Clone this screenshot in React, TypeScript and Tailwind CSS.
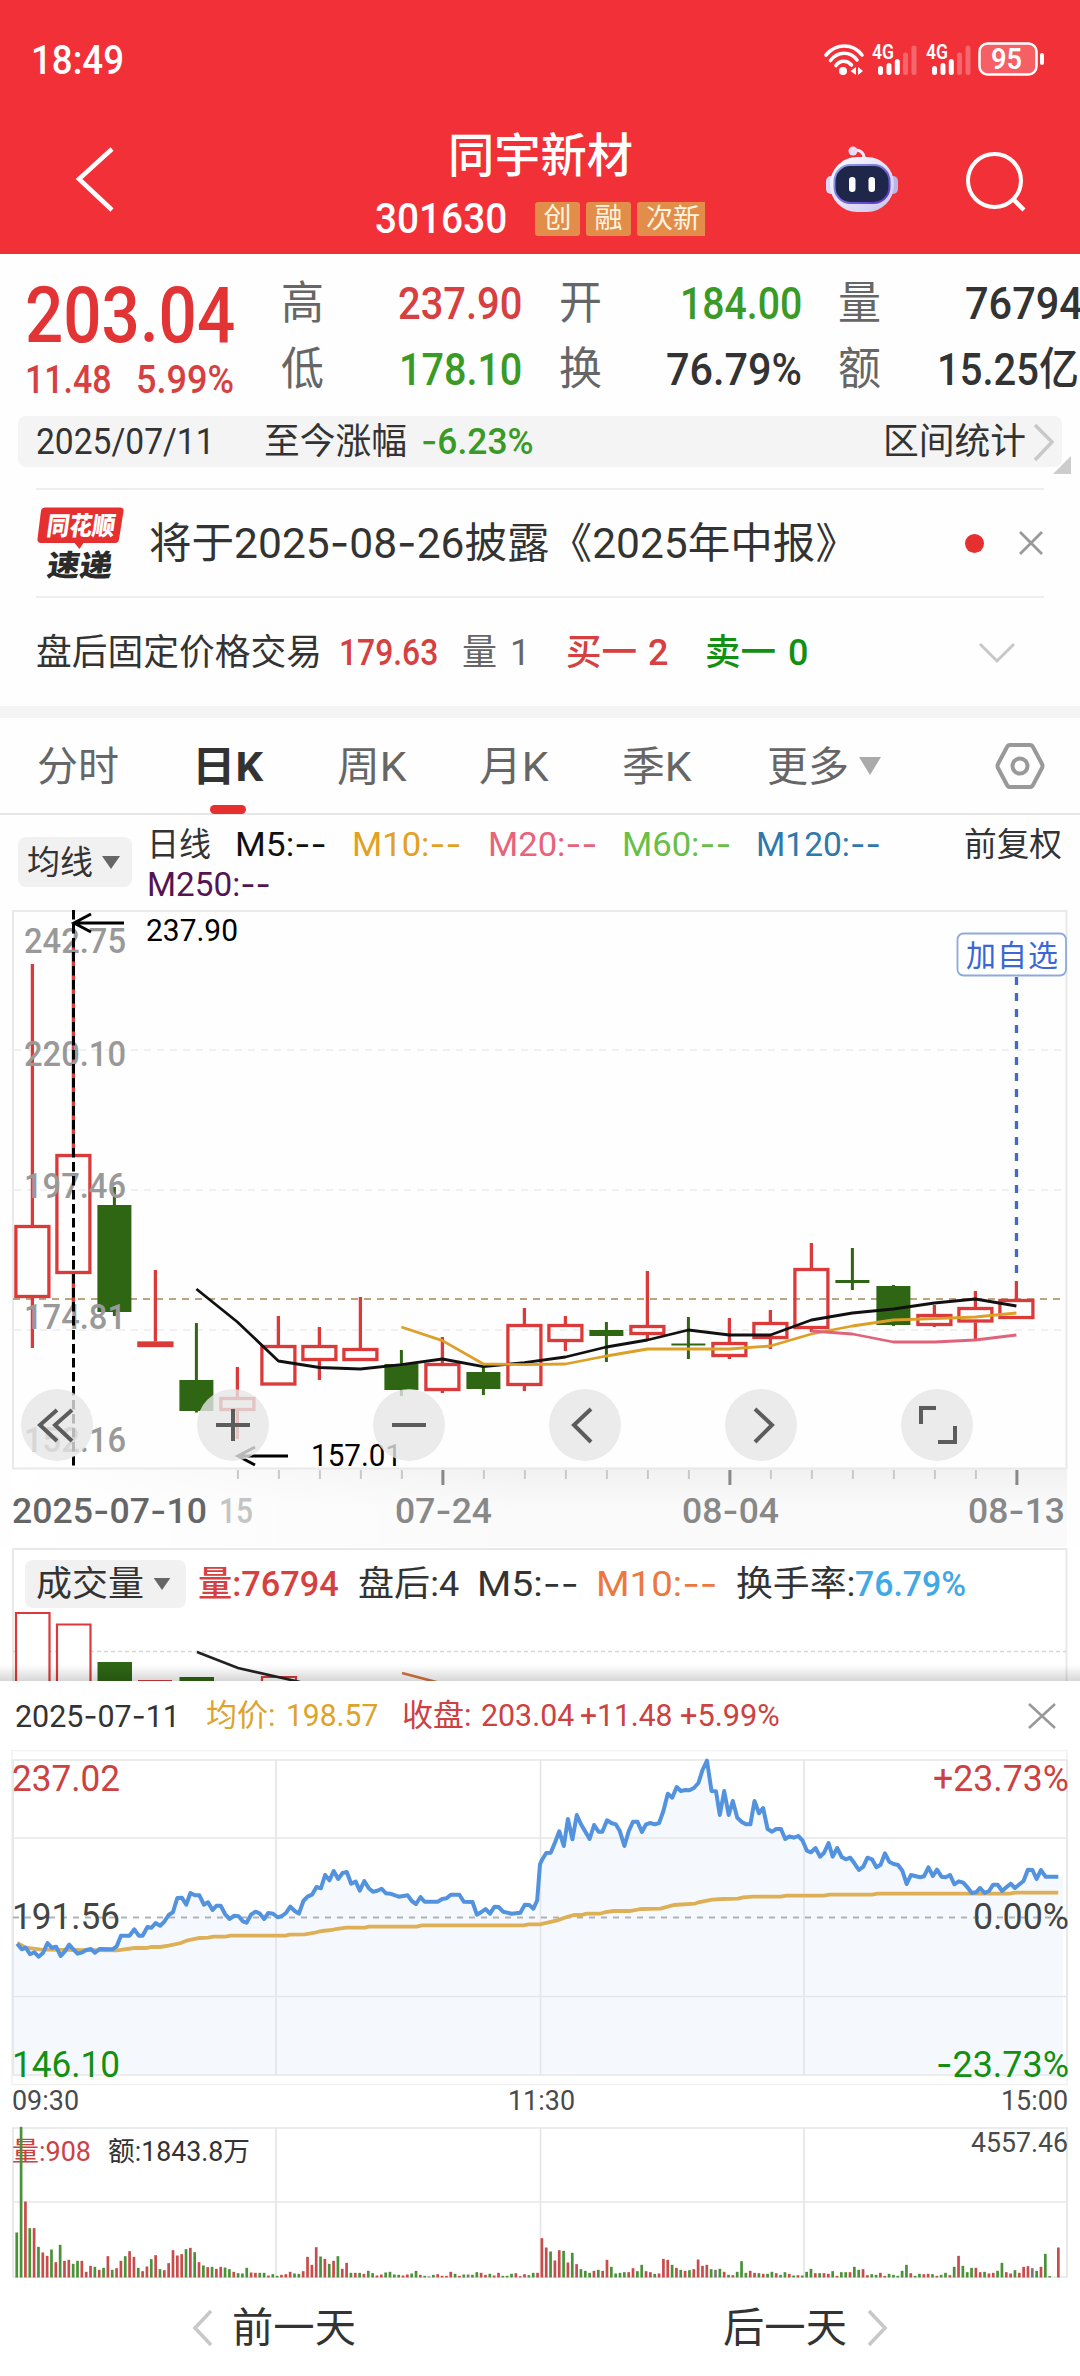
import { Fragment, useLayoutEffect, useRef, type ReactNode } from "react";

/* Wide hyphens, as the numeric face of the app draws them. */
const wide = (text: string): ReactNode =>
  text.split("-").map((part, i) => (
    <Fragment key={i}>
      {i > 0 && <span className="font-['Inter']">-</span>}
      {part}
    </Fragment>
  ));
const wideSvg = (text: string): ReactNode =>
  text.split("-").map((part, i) => (
    <Fragment key={i}>
      {i > 0 && <tspan className="font-['Inter']">-</tspan>}
      {part}
    </Fragment>
  ));

/* One line of text condensed or stretched to the width of its box. */
function Fit({ className, children }: { className: string; children: string }) {
  const box = useRef<HTMLSpanElement>(null);
  const ink = useRef<HTMLSpanElement>(null);
  useLayoutEffect(() => {
    if (!box.current || !ink.current) return;
    const ratio = box.current.clientWidth / ink.current.offsetWidth;
    ink.current.style.transform = `scaleX(${ratio})`;
  }, [children]);
  return (
    <span ref={box} className={`block shrink-0 whitespace-nowrap leading-none ${className}`}>
      <span ref={ink} className="inline-block origin-left">
        {wide(children)}
      </span>
    </span>
  );
}

function Signal() {
  return (
    <svg className="w-[46px] h-[40px]" viewBox="0 -8 46 40">
      <text x="0" y="15" fontSize="20.500" fontWeight="600" fill="#fff" textLength="22" lengthAdjust="spacingAndGlyphs">4G</text>
      <g strokeWidth="5" strokeLinecap="round" stroke="#fff">
        <path d="M8.500 24.500V28.500M17 21.500V28.500M25.300 17.500V28.500" />
        <path d="M33.500 11V28.500M42 4V28.500" opacity=".27" />
      </g>
    </svg>
  );
}

function Header() {
  return (
    <header className="flex h-[254px] flex-col bg-[#f13037] text-white">
      <div className="flex h-[76px] items-end">
        <Fit className="mb-[-5px] ml-[31px] w-[93px] text-[41px] font-medium">18:49</Fit>
        <svg className="ml-[699px] h-[32px] w-[42px]" viewBox="0 0 42 32">
          <g fill="none" stroke="#fff" strokeWidth="3.600" strokeLinecap="round">
            <path d="M3 11C13 -1 30 -1 39 11" />
            <path d="M7.500 16.500C15 7 27 7 34 16" />
            <path d="M13 21.500C17 16 24 16 28.500 21" />
          </g>
          <circle cx="20" cy="27" r="4" fill="#fff" />
          <path d="M33 23V31L27.500 27ZM35 23V31L40 27Z" fill="#fff" />
        </svg>
        <div className="ml-[7px] flex gap-[8px]">
          <Signal />
          <Signal />
        </div>
        <svg className="ml-[6px] h-[34px] w-[68px]" viewBox="0 0 68 34">
          <rect x="1.500" y="1.500" width="57" height="31" rx="8" fill="#f65f64" stroke="#fff" strokeWidth="2.500" />
          <path d="M64 13V21" stroke="#fff" strokeWidth="4" strokeLinecap="round" />
          <text x="13" y="27" fontSize="29" fontWeight="600" fill="#fff" textLength="31" lengthAdjust="spacingAndGlyphs">95</text>
        </svg>
      </div>
      <div className="flex flex-1">
        <svg className="ml-[74px] mt-[69px] h-[68px] w-[42px]" viewBox="0 0 42 68">
          <path d="M38 4L5 34L38 65" fill="none" stroke="#fff" strokeWidth="4.500" />
        </svg>
        <div className="ml-[259px] flex w-[330px] flex-col">
          <Fit className="ml-[73px] mt-[56px] w-[185px] text-[47px] font-medium">同宇新材</Fit>
          <div className="mt-[19px] flex items-center text-[28px] text-[#fff4e0]">
            <Fit className="w-[132px] text-[42px] font-medium text-white">301630</Fit>
            <span className="ml-[28px] flex h-[34px] w-[45px] items-center justify-center rounded-[3px] bg-[#e28d49] leading-none">创</span>
            <span className="ml-[6px] flex h-[34px] w-[45px] items-center justify-center rounded-[3px] bg-[#e28d49] leading-none">融</span>
            <span className="ml-[6px] flex h-[34px] w-[68px] items-center justify-center rounded-l-[3px] bg-[#e28d49] pl-[4px] text-[27px] leading-none">次新</span>
          </div>
        </div>
        <svg className="ml-[120px] mt-[69px] h-[68px] w-[74px]" viewBox="0 0 74 68">
          <defs>
            <linearGradient id="shell" x1="0" y1="0" x2="1" y2="1">
              <stop offset="0" stopColor="#ffffff" />
              <stop offset="1" stopColor="#c9c4ee" />
            </linearGradient>
            <linearGradient id="rim" x1="0" y1="0" x2="1" y2="1">
              <stop offset="0" stopColor="#8fa6f0" />
              <stop offset="1" stopColor="#5b2fc4" />
            </linearGradient>
          </defs>
          <path d="M28 6C34 4 39 7 39 13" fill="none" stroke="#efe9fb" strokeWidth="3" />
          <circle cx="28" cy="6" r="4.500" fill="#e9dcf3" />
          <rect x="1" y="31" width="14" height="18" rx="5" fill="#dcd8f5" />
          <rect x="59" y="31" width="14" height="18" rx="5" fill="#b9b5ea" />
          <rect x="5" y="12" width="64" height="55" rx="27" fill="url(#shell)" />
          <rect x="9.500" y="20" width="55" height="38" rx="16" fill="#1e274a" stroke="url(#rim)" strokeWidth="2" />
          <rect x="24" y="32" width="6.500" height="15" rx="3.200" fill="#fff" />
          <rect x="43.500" y="32" width="6.500" height="15" rx="3.200" fill="#fff" />
        </svg>
        <svg className="ml-[65px] mt-[74px] h-[62px] w-[64px]" viewBox="0 0 64 62">
          <circle cx="30.500" cy="30.500" r="26.500" fill="none" stroke="#fff" strokeWidth="4" />
          <path d="M49 49L60 60" stroke="#fff" strokeWidth="4.500" />
        </svg>
      </div>
    </header>
  );
}

function Quote() {
  return (
    <section className="h-[234px] overflow-hidden">
      <div className="flex h-[162px] w-[1100px]">
        <div className="ml-[25px] flex w-[256px] flex-col text-[#e23435]">
          <Fit className="mt-[24px] w-[210px] text-[77px] font-medium">203.04</Fit>
          <div className="mt-[6px] flex font-medium text-[#d64040]">
            <Fit className="w-[87px] text-[39px]">11.48</Fit>
            <Fit className="ml-[24px] w-[98px] text-[39px]">5.99%</Fit>
          </div>
        </div>
        <div className="flex flex-col gap-[20px] pt-[26px] font-medium">
          <div className="flex h-[46px] items-center text-[45px] text-[#333]">
            <Fit className="w-[43px] font-normal text-[#666]">高</Fit>
            <Fit className="ml-[74px] w-[124px] text-[#d64040]">237.90</Fit>
            <Fit className="ml-[37px] w-[43px] font-normal text-[#666]">开</Fit>
            <Fit className="ml-[78px] w-[122px] text-[#3a9a26]">184.00</Fit>
            <Fit className="ml-[36px] w-[43px] font-normal text-[#666]">量</Fit>
            <Fit className="ml-[84px] w-[118px]">76794</Fit>
          </div>
          <div className="flex h-[46px] items-center text-[45px] text-[#333]">
            <Fit className="w-[43px] font-normal text-[#666]">低</Fit>
            <Fit className="ml-[75px] w-[123px] text-[#3a9a26]">178.10</Fit>
            <Fit className="ml-[37px] w-[43px] font-normal text-[#666]">换</Fit>
            <Fit className="ml-[64px] w-[136px]">76.79%</Fit>
            <Fit className="ml-[36px] w-[43px] font-normal text-[#666]">额</Fit>
            <Fit className="ml-[56px] w-[142px]">15.25亿</Fit>
          </div>
        </div>
      </div>
      <div className="relative ml-[18px] flex h-[51px] w-[1044px] items-center rounded-[8px] bg-[#f4f4f4] text-[36px] text-[#333]">
        <Fit className="ml-[18px] w-[179px]">2025/07/11</Fit>
        <Fit className="ml-[49px] w-[143px]">至今涨幅</Fit>
        <Fit className="ml-[14px] w-[113px] font-medium text-[#3a9a26]">-6.23%</Fit>
        <Fit className="ml-[349px] w-[143px]">区间统计</Fit>
        <svg className="ml-[6px] h-[40px] w-[24px]" viewBox="0 0 24 40">
          <path d="M3 3L20 20L3 38" fill="none" stroke="#c8c8c8" strokeWidth="3.500" />
        </svg>
        <svg className="absolute -right-[9px] top-[40px] h-[18px] w-[18px]" viewBox="0 0 18 18">
          <path d="M18 0V18H0Z" fill="#ccc" />
        </svg>
      </div>
    </section>
  );
}

function Notices() {
  return (
    <section className="mx-[36px] h-[218px] border-t-2 border-[#eee] text-[#333]">
      <div className="flex h-[108px] items-center border-b-2 border-[#eee]">
        <svg className="h-[76px] w-[90px]" viewBox="0 0 90 76">
          <path d="M9 2H85Q89 2 88.500 6L84 34Q83.500 38 80 38H48L44 44L39 38H5Q1 38 1.500 34L5 6Q5.500 2 9 2Z" fill="#e62f2f" />
          <g transform="skewX(-8)" fontWeight="900" fontFamily="Noto Sans CJK SC">
            <text x="14" y="30" fontSize="26" fill="#fff" textLength="69" lengthAdjust="spacingAndGlyphs">同花顺</text>
            <text x="20" y="71" fontSize="30" fill="#2b2b2b" textLength="66" lengthAdjust="spacingAndGlyphs">速递</text>
          </g>
        </svg>
        <Fit className="ml-[24px] w-[709px] text-[42px]">将于2025-08-26披露《2025年中报》</Fit>
        <span className="ml-[107px] h-[19px] w-[19px] shrink-0 rounded-full bg-[#e62f2f]" />
        <svg className="ml-[34px] h-[26px] w-[26px] shrink-0" viewBox="0 0 26 26">
          <path d="M2 2L24 24M24 2L2 24" stroke="#999" strokeWidth="2.800" />
        </svg>
      </div>
      <div className="flex h-[110px] items-center text-[36px]">
        <Fit className="w-[286px]">盘后固定价格交易</Fit>
        <Fit className="ml-[17px] w-[99px] font-medium text-[#d64040]">179.63</Fit>
        <Fit className="ml-[24px] w-[35px] text-[#666]">量</Fit>
        <Fit className="ml-[13px] w-[20px] text-[#666]">1</Fit>
        <Fit className="ml-[36px] w-[71px] font-medium text-[#d64040]">买一</Fit>
        <Fit className="ml-[11px] w-[20px] font-medium text-[#d64040]">2</Fit>
        <Fit className="ml-[37px] w-[71px] font-medium text-[#119011]">卖一</Fit>
        <Fit className="ml-[12px] w-[20px] font-medium text-[#119011]">0</Fit>
        <svg className="ml-[170px] h-[22px] w-[38px]" viewBox="0 0 38 22">
          <path d="M2 2L19 19L36 2" fill="none" stroke="#c8c8c8" strokeWidth="3" />
        </svg>
      </div>
    </section>
  );
}

function Tabs() {
  return (
    <nav className="flex h-[97px] items-center border-b-2 border-[#e6e6e6] text-[41px] text-[#666]">
      <Fit className="ml-[37px] mt-[4px] w-[82px]">分时</Fit>
      <div className="relative ml-[73px] mt-[4px]">
        <Fit className="w-[71px] font-bold text-[#333]">日K</Fit>
        <span className="absolute left-[18px] top-[58px] h-[9px] w-[36px] rounded-full bg-[#e62f2f]" />
      </div>
      <Fit className="ml-[74px] mt-[4px] w-[70px]">周K</Fit>
      <Fit className="ml-[72px] mt-[4px] w-[70px]">月K</Fit>
      <Fit className="ml-[73px] mt-[4px] w-[70px]">季K</Fit>
      <Fit className="ml-[75px] mt-[4px] w-[82px]">更多</Fit>
      <svg className="ml-[9px] h-[18px] w-[24px]" viewBox="0 0 24 18">
        <path d="M1 0H23L12 18Z" fill="#aaa" />
      </svg>
      <svg className="ml-[113px] h-[48px] w-[50px]" viewBox="0 0 50 48">
        <path d="M15 3H35Q37 3 38 5L47 22Q48 24 47 26L38 43Q37 45 35 45H15Q13 45 12 43L3 26Q2 24 3 22L12 5Q13 3 15 3Z" fill="none" stroke="#999" strokeWidth="4" />
        <circle cx="25" cy="24" r="7.500" fill="none" stroke="#999" strokeWidth="4" />
      </svg>
    </nav>
  );
}

function Triangle({ className }: { className: string }) {
  return (
    <svg className={className} viewBox="0 0 18 13">
      <path d="M0 0H18L9 13Z" fill="#666" />
    </svg>
  );
}

function AverageLegend() {
  return (
    <section className="flex h-[94px] text-[33px] text-[#333]">
      <div className="ml-[18px] mt-[22px] flex h-[50px] w-[114px] items-center rounded-[8px] bg-[#f1f1f1]">
        <Fit className="ml-[9px] w-[66px]">均线</Fit>
        <Triangle className="ml-[9px] h-[13px] w-[18px]" />
      </div>
      <div className="ml-[15px] flex w-[932px] flex-col gap-[7px] pt-[13px]">
        <div className="flex text-[33px]">
          <Fit className="w-[64px]">日线</Fit>
          <Fit className="ml-[24px] w-[92px] text-[#111]">M5:--</Fit>
          <Fit className="ml-[25px] w-[109px] text-[#e2a11e]">M10:--</Fit>
          <Fit className="ml-[27px] w-[109px] text-[#e8637a]">M20:--</Fit>
          <Fit className="ml-[25px] w-[109px] text-[#67bf45]">M60:--</Fit>
          <Fit className="ml-[25px] w-[125px] text-[#2f78ab]">M120:--</Fit>
          <Fit className="ml-[83px] w-[98px]">前复权</Fit>
        </div>
        <Fit className="w-[124px] text-[#541454]">M250:--</Fit>
      </div>
    </section>
  );
}

const RED = "#db3a3a";
const GREEN = "#2e6614";

type Candle = [kind: "r" | "g", top: number, bottom: number, high: number, low: number];
const candles: Candle[] = [
  ["r", 1224, 1297, 963, 1347],
  ["r", 1153, 1273, 940, 1306],
  ["g", 1204, 1311, 1186, 1315],
  ["r", 1340.5, 1346, 1269, 1346],
  ["g", 1379, 1410, 1322, 1411.5],
  ["r", 1396, 1410, 1366, 1438],
  ["r", 1344, 1384.5, 1315, 1384],
  ["r", 1344, 1360, 1326, 1379],
  ["r", 1347, 1360, 1296, 1359],
  ["g", 1363, 1389, 1349, 1395],
  ["r", 1362, 1390, 1336, 1392],
  ["g", 1371, 1388, 1365, 1394],
  ["r", 1323, 1385, 1307, 1390],
  ["r", 1323, 1341, 1315, 1350],
  ["g", 1329, 1335, 1321, 1361],
  ["r", 1324, 1334, 1270, 1338],
  ["g", 1342.5, 1344.500, 1316, 1358],
  ["r", 1341, 1356, 1317, 1358],
  ["r", 1321, 1338, 1309, 1348],
  ["r", 1267, 1328, 1242, 1331],
  ["g", 1279, 1282, 1247, 1289],
  ["g", 1285, 1324, 1284, 1325],
  ["r", 1313, 1325, 1304, 1326],
  ["r", 1306, 1321.5, 1290, 1338],
  ["r", 1298, 1318, 1280, 1300],
];
const cx = (i: number) => 32.4 + i * 41;
const trend = (from: number, ys: number[]) => ys.map((y, k) => `${cx(from + k)},${y}`).join(" ");

const ma5 = [1288, 1321, 1360, 1366.5, 1368, 1363.7, 1358, 1365.7, 1361.6, 1356, 1346, 1339, 1329, 1334, 1334, 1319, 1312, 1308, 1302, 1298, 1305];
const ma10 = [1326, 1339.6, 1363, 1363.7, 1363, 1355, 1348, 1348, 1348, 1345, 1333, 1325, 1319, 1317.6, 1316, 1312];
const ma20 = [1330, 1333, 1341, 1341, 1339, 1334];

const scale: [string, number][] = [
  ["242.75", 952],
  ["220.10", 1065],
  ["197.46", 1197],
  ["174.81", 1328],
  ["152.16", 1451],
];
const dates: [string, number, number, string][] = [
  ["2025-07-10", 12, 195, "#666"],
  ["15", 219, 34, "#c4c4c4"],
  ["07-24", 395, 97, "#888"],
  ["08-04", 682, 97, "#888"],
  ["08-13", 968, 97, "#888"],
];

function RoundButton({ children }: { children: ReactNode }) {
  return (
    <span className="flex h-[72px] w-[72px] items-center justify-center rounded-full bg-[#e6e6e6]/80">
      <svg className="h-[72px] w-[72px]" viewBox="-36 -36 72 72" fill="none" stroke="#5c5c5c" strokeWidth="4">
        {children}
      </svg>
    </span>
  );
}

function CandleChart() {
  return (
    <section className="relative h-[638px]">
      <svg className="block h-[638px] w-[1080px]" viewBox="0 908 1080 638">
        <defs>
          <linearGradient id="fade" x1="0" y1="0" x2="1" y2="0">
            <stop offset="0" stopColor="#fff" />
            <stop offset=".5" stopColor="#fff" stopOpacity="0" />
          </linearGradient>
          <linearGradient id="shade" x1="0" y1="0" x2="0" y2="1">
            <stop offset="0" stopColor="#f1f1f1" />
            <stop offset=".5" stopColor="#fafafa" />
            <stop offset="1" stopColor="#fafafa" />
          </linearGradient>
        </defs>
        <rect x="13" y="1468" width="1054" height="78" fill="url(#shade)" />
        <rect x="13" y="1468" width="1054" height="78" fill="url(#fade)" />
        <rect x="13" y="910" width="1053.500" height="557.500" fill="#fefefe" stroke="#e9e9e9" strokeWidth="2" />
        <g stroke="#ebebeb" strokeWidth="1.500" strokeDasharray="7 6">
          <path d="M14 1049H1066M14 1189H1066M14 1329H1066" />
        </g>
        <path d="M13 1298H1066" stroke="#bba57c" strokeWidth="2" strokeDasharray="7 6" />
        {candles.map(([kind, top, bottom, high, low], i) =>
          kind === "g" ? (
            <g key={i} fill={GREEN}>
              <rect x={cx(i) - 1.5} y={high} width="3" height={low - high} />
              <rect x={cx(i) - 17} y={top} width="34" height={bottom - top} />
            </g>
          ) : (
            <g key={i} fill="none" stroke={RED} strokeWidth="3.300">
              <path d={`M${cx(i)} ${high}V${top}M${cx(i)} ${bottom}V${Math.max(low, bottom)}`} />
              <rect x={cx(i) - 16.5} y={top + 1.5} width="33" height={bottom - top - 3} />
            </g>
          ),
        )}
        <g fill="#999" fontSize="35" fontWeight="500">
          {scale.map(([label, y]) => (
            <text key={label} x="24" y={y} textLength="102" lengthAdjust="spacingAndGlyphs">{label}</text>
          ))}
        </g>
        <g fill="none" strokeWidth="2.800" strokeLinejoin="round">
          <polyline points={trend(4, ma5)} stroke="#111" />
          <polyline points={trend(9, ma10)} stroke="#dd9f26" />
          <polyline points={trend(19, ma20)} stroke="#e0637a" />
        </g>
        <path d="M73.500 909V1465" stroke="#000" strokeWidth="3" strokeDasharray="9.500 4.500" />
        <g fill="none" stroke="#000" strokeWidth="3">
          <path d="M124 922H74M91 913L74 922L91 931" />
          <path d="M288 1455H238M255 1446L238 1455L255 1464" />
        </g>
        <g fontSize="31" fill="#000">
          <text x="146" y="940" textLength="92" lengthAdjust="spacingAndGlyphs">237.90</text>
          <text x="311" y="1465" textLength="91" lengthAdjust="spacingAndGlyphs">157.01</text>
        </g>
        <path d="M1016.500 976V1280" stroke="#4169c6" strokeWidth="3.300" strokeDasharray="8 8" />
        <rect x="957.500" y="932.500" width="108.500" height="42" rx="6" fill="#fff" stroke="#8ea9de" strokeWidth="1.800" />
        <text x="966" y="965" fontSize="30" fill="#3a66d6" textLength="92">加自选</text>
        {candles.map((_, i) =>
          i < 5 ? null : (
            <path
              key={i}
              d={`M${cx(i) + 0.500} 1469V${i === 10 || i === 17 || i === 24 ? 1484 : 1478}`}
              stroke={i === 10 || i === 17 || i === 24 ? "#888" : "#c9c9c9"}
              strokeWidth={i === 10 || i === 17 || i === 24 ? 3 : 2}
            />
          ),
        )}
        <g fontSize="35" fontWeight="500">
          {dates.map(([label, x, width, fill]) => (
            <text key={label} x={x} y="1522" fill={fill} textLength={width} lengthAdjust="spacingAndGlyphs">{wideSvg(label)}</text>
          ))}
        </g>
      </svg>
      <div className="absolute left-[21px] top-[480px] flex gap-[104px]">
        <RoundButton><path d="M0 -15L-17 0L0 16M15 -15L-2 0L15 16" /></RoundButton>
        <RoundButton><path d="M-17 0H17M0 -16V16" /></RoundButton>
        <RoundButton><path d="M-17 0H17" /></RoundButton>
        <RoundButton><path d="M6 -16L-11 0L6 17" /></RoundButton>
        <RoundButton><path d="M-6 -16L11 0L-6 17" /></RoundButton>
        <RoundButton><path d="M-1 -17H-16V-1M1 17H18V1" /></RoundButton>
      </div>
    </section>
  );
}

function VolumePanel() {
  return (
    <section className="relative h-[134px] overflow-hidden bg-white">
      <svg className="absolute left-0 top-0 h-[134px] w-[1080px]" viewBox="0 1546 1080 134">
        <defs>
          <linearGradient id="sheet" x1="0" y1="0" x2="0" y2="1">
            <stop offset="0" stopColor="#000" stopOpacity="0" />
            <stop offset="1" stopColor="#000" stopOpacity=".16" />
          </linearGradient>
        </defs>
        <path d="M13 1700V1548H1066.500V1700" fill="none" stroke="#e9e9e9" strokeWidth="2" />
        <path d="M13 1650.500H1066" stroke="#d8d8d8" strokeWidth="1.500" strokeDasharray="4 3" />
        <g fill="#fff" stroke={RED} strokeWidth="2.200">
          <path d="M16 1700V1612H49.500V1700M57 1700V1623.500H90.500V1700M138 1680H172M262 1700V1676H296V1700" />
        </g>
        <path d="M97.500 1661H132V1690H97.500ZM179.500 1676H214V1690H179.500Z" fill={GREEN} />
        <path d="M197 1651L238 1667L300 1681" fill="none" stroke="#222" strokeWidth="2.600" />
        <path d="M402 1672L440 1682" stroke="#d9733f" strokeWidth="2.600" />
        <rect x="0" y="1664" width="1080" height="16" fill="url(#sheet)" />
      </svg>
      <div className="relative flex h-[74px] items-center pl-[25px] text-[35px] text-[#333]">
        <div className="flex h-[48px] w-[161px] items-center rounded-[8px] bg-[#f1f1f1]">
          <Fit className="ml-[11px] w-[108px]">成交量</Fit>
          <Triangle className="ml-[9px] h-[12px] w-[18px]" />
        </div>
        <Fit className="ml-[12px] w-[141px] font-medium text-[#d64040]">量:76794</Fit>
        <Fit className="ml-[19px] w-[101px]">盘后:4</Fit>
        <Fit className="ml-[18px] w-[102px]">M5:--</Fit>
        <Fit className="ml-[17px] w-[122px] text-[#ec7840]">M10:--</Fit>
        <Fit className="ml-[18px] w-[119px]">换手率:</Fit>
        <Fit className="w-[111px] font-medium text-[#41a8e6]">76.79%</Fit>
      </div>
    </section>
  );
}

/* Minute samples of the price, as x,y pairs; the two halves of the session. */
const priceAm = "50,608 63,625 75,620 87,640 100,634 112,647 125,636 138,606 150,620 163,617 176,645 188,632 201,611 213,625 226,638 239,634 251,627 264,624 276,635 289,624 327,625 339,616 351,584 376,584 390,565 403,584 414,584 428,558 440,560 452,546 465,554 477,542 490,522 502,514 515,471 528,470 541,491 553,456 566,463 579,463 592,491 604,484 617,507 629,494 641,494 654,520 667,534 680,524 693,526 705,541 716,545 729,521 742,512 754,517 767,534 779,516 793,518 806,529 819,525 831,515 843,497 856,510 868,518 881,480 893,467 906,461 919,438 932,442 944,402 957,418 969,390 982,414 995,396 1007,393 1020,428 1033,422 1045,449 1058,420 1071,442 1083,452 1096,449 1108,443 1121,457 1133,458 1158,467 1184,463 1196,480 1208,489 1221,468 1233,482 1272,482 1284,474 1297,472 1309,461 1334,461 1347,482 1372,483 1385,521 1398,513 1410,504 1423,518 1436,497 1448,498 1461,512 1486,518 1511,515 1524,491 1537,492 1549,503 1560,478";
const pricePm = "0,370 6,356 18,336 31,335 44,303 56,271 69,315 81,234 94,295 107,222 119,250 132,273 144,294 157,252 170,272 181,272 195,238 207,246 220,250 232,271 245,315 258,270 270,242 283,242 296,273 308,250 320,246 333,250 346,246 358,211 371,158 384,170 397,138 409,150 422,147 434,148 447,141 460,126 472,87 485,59 498,150 511,151 522,222 535,150 548,222 560,180 573,230 586,243 598,250 611,250 623,180 636,217 648,201 661,264 674,272 686,264 700,264 712,294 724,286 737,290 750,285 762,298 775,329 787,334 800,321 813,347 825,335 838,306 850,347 863,321 876,348 888,355 901,350 913,367 926,387 939,377 951,350 964,355 977,379 989,371 1002,337 1014,362 1027,369 1040,372 1052,389 1065,429 1077,402 1104,409 1115,406 1128,379 1141,405 1153,386 1166,407 1178,409 1191,402 1203,430 1216,421 1229,425 1242,440 1254,456 1266,454 1278,441 1291,456 1304,450 1316,431 1329,431 1342,450 1354,439 1367,428 1379,441 1404,420 1417,386 1430,387 1442,414 1455,387 1468,407 1505,407";
const avgAm = "50,606 75,620 120,626 340,628 390,621 425,621 440,618 465,618 490,614 525,606 545,598 580,591 605,590 620,587 655,587 670,584 830,584 840,581 885,580 910,576 935,570 965,567 975,564 1005,560 1060,560 1070,557 1210,557 1225,553 1520,553 1535,550";
const avgPm = "0,550 50,538 80,527 100,522 120,522 135,518 175,518 190,513 215,510 260,510 295,504 350,503 390,492 450,488 460,484 500,476 530,474 575,473 590,469 620,467 700,467 715,464 825,464 840,461 965,461 980,458 1365,458 1380,455 1505,455";

const place = (pairs: string, left: number) =>
  pairs
    .split(" ")
    .map((pair) => {
      const [x, y] = pair.split(",").map(Number);
      return `${(left + x / 2.904).toFixed(1)},${(1740 + y / 3).toFixed(1)}`;
    })
    .join(" ");
const price = `${place(priceAm, 0)} ${place(pricePm, 540)}`;
const average = `${place(avgAm, 0)} ${place(avgPm, 540)}`;

/* Minute volumes: r up, g down, n flat. */
const volumes =
  "g135 g452 r228 g148 r148 g92 r75 r65 g84 r46 g98 r50 r53 g41 g50 r50 r17 r35 g32 r23 g29 r64 g23 r28 r50 g64 r79 r62 g29 r19 r33 g55 r67 g25 r22 r43 r82 r66 r70 g85 r89 g76 r46 g36 r31 g32 r26 r32 g30 g25 r17 g13 g12 g29 r15 r14 g14 g14 r6 g10 g5 r8 r10 r17 g12 g11 r19 r62 r38 r91 g63 r56 g41 r50 g64 r26 r44 g14 r14 g14 r11 g20 g13 r6 r9 g15 g17 g9 g8 r6 r9 g12 g20 r8 g5 n3 g8 r10 r5 r5 r17 g11 r5 g9 n9 g8 g16 r14 r8 g11 r6 r14 g5 g5 g11 r13 r4 r10 g7 g14 r14 " +
  "r118 r90 g78 r51 r82 g80 r45 g74 r40 g25 g20 g14 r20 g23 r20 r53 g32 g12 g14 g16 r16 r28 g19 g38 r19 r16 g11 r12 r56 r53 g38 r29 g23 r20 g22 r25 r54 r35 r38 g25 n23 g26 r17 g8 r7 g17 g49 g14 r20 r14 g13 r11 g11 g17 r13 g8 g16 r11 g6 r7 g6 g17 g26 r13 g13 r13 r11 g19 r5 g16 g16 r16 g32 g23 r25 r7 g10 g8 r14 r5 g11 g8 g5 g20 g38 r13 g5 g11 r10 r11 g10 r5 g8 g14 r7 g32 r65 g35 g16 g29 r29 r16 g17 r12 r14 g20 g44 r16 r12 g22 r14 r32 r34 n28 g20 r32 g71 g4 n0 r90";
const volumeColor: Record<string, string> = { r: "#c94c4c", g: "#499238", n: "#777" };

function DaySheet() {
  return (
    <section className="flex h-[696px] flex-col bg-white text-[#333]">
      <div className="flex h-[69px] items-center text-[31px]">
        <Fit className="ml-[15px] w-[165px]">2025-07-11</Fit>
        <Fit className="ml-[26px] w-[70px] text-[#dda32a]">均价:</Fit>
        <Fit className="ml-[10px] w-[92px] text-[#dda32a]">198.57</Fit>
        <Fit className="ml-[24px] w-[70px] text-[#cc4141]">收盘:</Fit>
        <Fit className="ml-[9px] w-[93px] text-[#cc4141]">203.04</Fit>
        <Fit className="ml-[6px] w-[92px] text-[#cc4141]">+11.48</Fit>
        <Fit className="ml-[8px] w-[100px] text-[#cc4141]">+5.99%</Fit>
        <svg className="ml-[247px] h-[28px] w-[30px]" viewBox="0 0 30 28">
          <path d="M2 2L28 26M28 2L2 26" stroke="#999" strokeWidth="2.600" />
        </svg>
      </div>
      <svg className="h-[531px] w-[1080px] shrink-0" viewBox="0 1749 1080 531">
        <path d="M12 1749.500H1067V2083.500H12Z" fill="none" stroke="#f1f1f1" strokeWidth="1.500" />
        <polygon points={`13,2074 13,1943 ${price} 1063,1876 1063,2074`} fill="#f5f9fe" />
        <g fill="none" stroke="#e5e6e8" strokeWidth="1.700">
          <path d="M13 1759H1067V2074H13ZM13 1837H1067M13 1995.500H1067M276 1759V2074M540.500 1759V2074M804 1759V2074" />
          <path d="M13 2127H1067V2276H13ZM13 2201H1067M276 2127V2276M540.500 2127V2276M804 2127V2276" />
        </g>
        <path d="M13 1916.500H1067" stroke="#b0b2b5" strokeWidth="2" strokeDasharray="6 6" />
        <polyline points={average} fill="none" stroke="#ddb057" strokeWidth="3.800" />
        <polyline points={price} fill="none" stroke="#5292de" strokeWidth="4" strokeLinejoin="round" />
        <g fontSize="36.500">
          <text x="12" y="1790" fill="#cc4141" textLength="108" lengthAdjust="spacingAndGlyphs">237.02</text>
          <text x="12" y="1928" fill="#444" textLength="108" lengthAdjust="spacingAndGlyphs">191.56</text>
          <text x="12" y="2076" fill="#119011" textLength="108" lengthAdjust="spacingAndGlyphs">146.10</text>
          <text x="933" y="1790" fill="#cc4141" textLength="136" lengthAdjust="spacingAndGlyphs">+23.73%</text>
          <text x="973" y="1928" fill="#444" textLength="96" lengthAdjust="spacingAndGlyphs">0.00%</text>
          <text x="936" y="2076" fill="#119011" textLength="133" lengthAdjust="spacingAndGlyphs">{wideSvg("-23.73%")}</text>
        </g>
        <g fontSize="27.500" fill="#4a4a4a">
          <text x="12" y="2109" textLength="67" lengthAdjust="spacingAndGlyphs">09:30</text>
          <text x="508" y="2109" textLength="67" lengthAdjust="spacingAndGlyphs">11:30</text>
          <text x="1001" y="2109" textLength="67" lengthAdjust="spacingAndGlyphs">15:00</text>
          <text x="971" y="2151" textLength="97" lengthAdjust="spacingAndGlyphs">4557.46</text>
        </g>
        <g fontSize="27">
          <text x="12" y="2160" fill="#cc4141" textLength="79" lengthAdjust="spacingAndGlyphs">量:908</text>
          <text x="108" y="2160" fill="#333" textLength="142" lengthAdjust="spacingAndGlyphs">额:1843.8万</text>
        </g>
        {volumes.split(" ").map((v, i) => {
          const height = Number(v.slice(1)) / 3;
          return (
            <rect key={i} x={15.4 + i * 4.34} y={2276.500 - height} width="2.700" height={height} fill={volumeColor[v[0]]} />
          );
        })}
      </svg>
      <div className="flex h-[94px] items-center text-[41px]">
        <svg className="ml-[191px] h-[38px] w-[22px]" viewBox="0 0 22 38">
          <path d="M20 2L4 19L20 36" fill="none" stroke="#c8c8c8" strokeWidth="3.500" />
        </svg>
        <Fit className="ml-[19px] w-[124px]">前一天</Fit>
        <Fit className="ml-[367px] w-[124px]">后一天</Fit>
        <svg className="ml-[20px] h-[38px] w-[22px]" viewBox="0 0 22 38">
          <path d="M2 2L18 19L2 36" fill="none" stroke="#c8c8c8" strokeWidth="3.500" />
        </svg>
      </div>
      <div className="h-[2px] border-b border-[#222]" />
    </section>
  );
}

export default function App() {
  return (
    <main className="h-[2376px] w-[1080px] overflow-hidden bg-[#fefefe] font-['Roboto','Noto_Sans_CJK_SC',sans-serif]">
      <Header />
      <Quote />
      <Notices />
      <div className="h-[12px] bg-[#f4f4f4]" />
      <Tabs />
      <AverageLegend />
      <CandleChart />
      <VolumePanel />
      <DaySheet />
    </main>
  );
}
